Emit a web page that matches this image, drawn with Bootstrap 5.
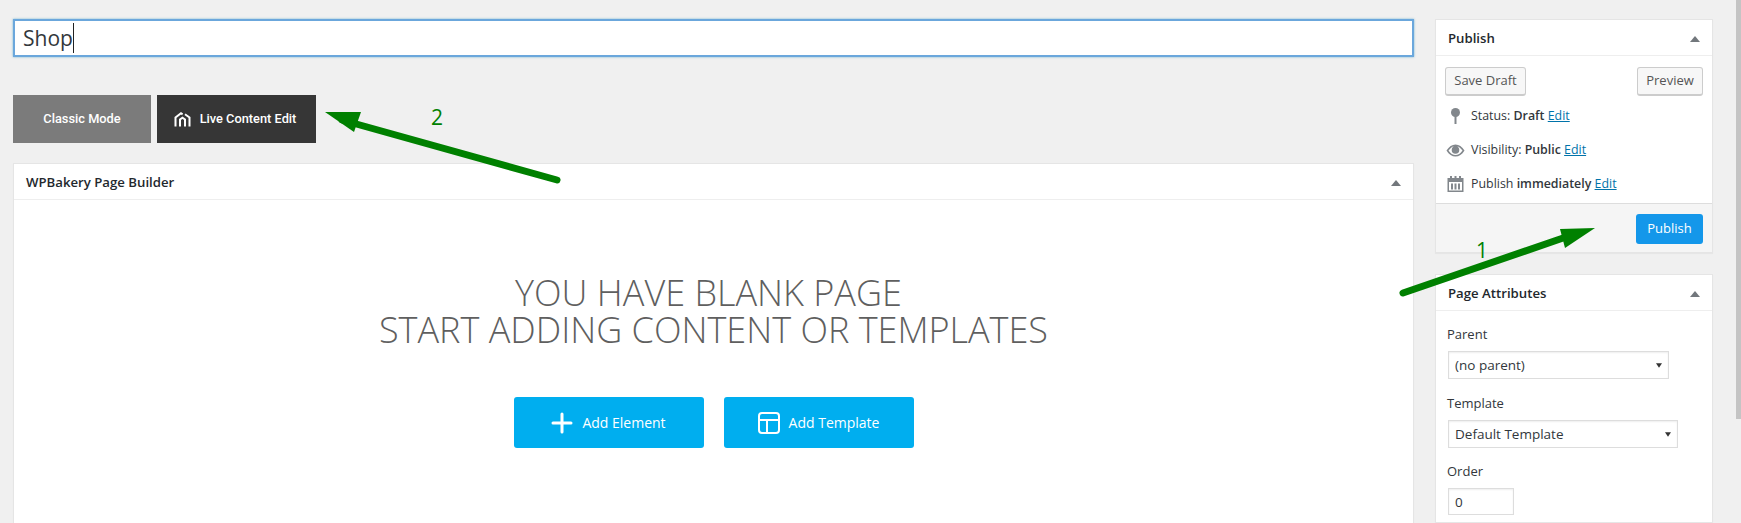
<!DOCTYPE html>
<html lang="en">
<head>
<meta charset="utf-8">
<title>Edit Page</title>
<link rel="stylesheet" href="https://cdn.jsdelivr.net/npm/bootstrap@5.3.0/dist/css/bootstrap.min.css">
<style>
html,body{height:523px;overflow:hidden}
body{background:#f0f0f0;font-family:"Open Sans",sans-serif;font-size:13px;color:#32373c;position:relative}
.shell{height:523px}
.main-col{width:1401px;margin-left:13px;padding-top:19px}
.side-col{width:278px;margin-left:21px;padding-top:19px}
.bar-col{width:5px;margin-left:23px}
.bar-thumb{height:419px;background:#c4c4c4}
.title-field{height:38px;border:2px solid #6ba7dc;background:#fff;font-size:21px;line-height:1;padding-left:8px;color:#32373c;box-shadow:0 0 2px rgba(30,140,190,.6)}
.type-caret{display:inline-block;width:1px;height:30px;background:#222}
.mode-row{margin-top:38px;gap:6px}
.mode-btn{height:48px;font-family:Roboto,sans-serif;font-weight:500;font-size:12.800px;color:#fff;border:0;border-radius:0}
.mode-classic{width:138px;background:#7b7b7b}
.mode-live{width:159px;background:#363636;gap:9px;padding:0 3px 0 0}
.wp-box{background:#fff;border:1px solid #e5e5e5;border-bottom:0;box-shadow:0 1px 1px rgba(0,0,0,.04);border-radius:0}
.box-head{height:36px;border-bottom:1px solid #eee;padding:2px 10px 0 12px;font-weight:600;color:#23282d;font-size:13.200px}
.builder{margin-top:20px;height:360px}
.tri{width:0;height:0;border-left:5px solid transparent;border-right:5px solid transparent;border-bottom:6px solid #72777c;margin-right:2px}
.blank-msg{margin-top:74px;font-weight:300;font-size:36px;line-height:37px;color:#5f5f5f;text-align:center}
.blank-first{padding-right:10px}
.add-row{margin-top:49px;gap:20px}
.add-btn{width:190px;height:51px;background:#00aeef;color:#fff;border:0;border-radius:3px;font-size:14px;gap:9px;padding:0}
.pub-top{padding:11px 9px 0 9px}
.wp-btn{height:29px;background:#f7f7f7;border:1px solid #ccc;border-bottom-width:2px;border-radius:3px;color:#555;font-size:13px;padding:0}
.btn-draft{width:81px}
.btn-view{width:66px}
.meta-list{padding:0 0 0 10px;margin:3px 0 0;font-size:12.400px}
.meta-item{height:34px;gap:6px}
.meta-ico{width:19px;flex:none}
.meta-item a{color:#0073aa}
.pub-foot{margin-top:2px;height:50px;background:#f5f5f5;border-top:1px solid #ddd;border-bottom:1px solid #e5e5e5;padding:10px 9px 0 0}
.pub-btn{width:67px;height:30px;background:#1497ea;color:#fff;border:0;border-radius:3px;font-size:13px;padding:0}
.attrs{margin-top:21px;height:248px}
.attr-body{padding:14px 11px}
.attr-label{line-height:18px;margin-bottom:8px}
.wp-select.form-select{height:28px;border:1px solid #ddd;border-radius:0;font-size:13.500px;color:#32373c;padding:0 0 0 6px;margin-bottom:14px;margin-left:1px;box-shadow:inset 0 1px 2px rgba(0,0,0,.07);background-size:6px 5px;background-position:right 6px center;background-image:url("data:image/svg+xml,%3Csvg xmlns='http://www.w3.org/2000/svg' viewBox='0 0 8 6'%3E%3Cpath d='M0 0h8L4 6z' fill='%23333'/%3E%3C/svg%3E")}
.wp-select.sel-a{width:221px;margin-bottom:15px}
.sel-b{width:230px}
.wp-num.form-control{width:66px;height:27px;border:1px solid #ddd;border-radius:0;font-size:13.500px;color:#32373c;padding:0 0 0 6px;margin-left:1px;box-shadow:inset 0 1px 2px rgba(0,0,0,.07)}
.arrows{position:absolute;left:0;top:0;pointer-events:none}
.arrows text{font-family:"Open Sans",sans-serif;font-size:21px;fill:#008000}
</style>
</head>
<body>
<div class="shell d-flex">
  <div class="main-col flex-none">
    <div class="title-field d-flex align-items-center">Shop<span class="type-caret"></span></div>
    <div class="mode-row d-flex">
      <button class="btn mode-btn mode-classic" type="button">Classic Mode</button>
      <button class="btn mode-btn mode-live d-flex align-items-center justify-content-center" type="button">
        <svg width="17" height="15" viewBox="0 0 17 15" fill="none" stroke="#fff" stroke-width="2"><path d="M1.500 14.500V5.500L7 1.300l1.600 1.100M11 2.300l4.500 3.200V14.500M6 14.500V7.500l2.500-1.800 2.500 1.800V14.500"/></svg>
        <span>Live Content Edit</span>
      </button>
    </div>
    <div class="wp-box builder">
      <div class="box-head d-flex align-items-center justify-content-between"><span>WPBakery Page Builder</span><i class="tri"></i></div>
      <div class="blank-msg"><div class="blank-first">YOU HAVE BLANK PAGE</div><div>START ADDING CONTENT OR TEMPLATES</div></div>
      <div class="add-row d-flex justify-content-center">
        <button class="btn add-btn d-flex align-items-center justify-content-center" type="button">
          <svg width="22" height="22" viewBox="0 0 22 22" stroke="#fff" stroke-width="3" stroke-linecap="round"><path d="M11 2v18M2 11h18"/></svg>
          <span>Add Element</span>
        </button>
        <button class="btn add-btn d-flex align-items-center justify-content-center" type="button">
          <svg width="22" height="22" viewBox="0 0 22 22" fill="none" stroke="#fff" stroke-width="2"><rect x="1" y="1" width="20" height="20" rx="3"/><path d="M1 8h20M9 8v13"/></svg>
          <span>Add Template</span>
        </button>
      </div>
    </div>
  </div>
  <div class="side-col flex-none">
    <div class="wp-box">
      <div class="box-head d-flex align-items-center justify-content-between"><span>Publish</span><i class="tri"></i></div>
      <div class="pub-top d-flex justify-content-between">
        <button class="btn wp-btn btn-draft" type="button">Save Draft</button>
        <button class="btn wp-btn btn-view" type="button">Preview</button>
      </div>
      <div class="meta-list">
        <div class="meta-item d-flex align-items-center">
          <svg class="meta-ico" height="16" viewBox="0 0 19 16" fill="#82878c"><circle cx="9.500" cy="4.500" r="4.500"/><rect x="8.500" y="6" width="2" height="10"/></svg>
          <span>Status: <b class="fw-semibold">Draft</b> <a href="#">Edit</a></span>
        </div>
        <div class="meta-item d-flex align-items-center">
          <svg class="meta-ico" height="13" viewBox="0 0 19 13"><path d="M0.500 6.500C3 2.500 6 .5 9.500 .5s6.500 2 9 6c-2.500 4-5.500 6-9 6s-6.500-2-9-6z" fill="#82878c"/><path d="M2.500 6.500C4.500 3.800 6 2.800 7 2.400a4.500 4.500 0 0 0 5 0c1 .4 2.500 1.400 4.500 4.100-2 3-4.500 4.600-7 4.600s-5-1.600-7-4.600z" fill="#fff"/><circle cx="9.500" cy="6" r="3.800" fill="#82878c"/></svg>
          <span>Visibility: <b class="fw-semibold">Public</b> <a href="#">Edit</a></span>
        </div>
        <div class="meta-item d-flex align-items-center">
          <svg class="meta-ico" height="16" viewBox="0 0 19 16" fill="#82878c"><path d="M1.500 2h16v14h-16zM3 6v8.500h13V6z" fill-rule="evenodd"/><rect x="4" y="0" width="2" height="3.500"/><rect x="8.500" y="0" width="2" height="3.500"/><rect x="13" y="0" width="2" height="3.500"/><rect x="5" y="7.500" width="2" height="6"/><rect x="8.500" y="7.500" width="2" height="6"/><rect x="12" y="7.500" width="2" height="6"/></svg>
          <span>Publish <b class="fw-semibold">immediately</b> <a href="#">Edit</a></span>
        </div>
      </div>
      <div class="pub-foot d-flex justify-content-end align-items-start">
        <button class="btn pub-btn" type="button">Publish</button>
      </div>
    </div>
    <div class="wp-box attrs">
      <div class="box-head d-flex align-items-center justify-content-between"><span>Page Attributes</span><i class="tri"></i></div>
      <div class="attr-body">
        <div class="attr-label">Parent</div>
        <select class="form-select wp-select sel-a"><option>(no parent)</option></select>
        <div class="attr-label">Template</div>
        <select class="form-select wp-select sel-b"><option>Default Template</option></select>
        <div class="attr-label">Order</div>
        <input class="form-control wp-num" type="text" value="0">
      </div>
    </div>
  </div>
  <div class="bar-col flex-none"><div class="bar-thumb"></div></div>
</div>
<svg class="arrows" width="1741" height="523" viewBox="0 0 1741 523">
  <g fill="#008000" stroke="#008000" stroke-linecap="round">
    <path d="M557 180L342 120" stroke-width="7" fill="none"/>
    <path d="M325 112L361 112L354 132Z" stroke="none"/>
    <path d="M1403 293L1566 237" stroke-width="7" fill="none"/>
    <path d="M1595 228L1560 229L1565 248Z" stroke="none"/>
  </g>
  <text x="431" y="125">2</text>
  <text x="1476" y="258">1</text>
</svg>
<script src="https://cdn.jsdelivr.net/npm/bootstrap@5.3.0/dist/js/bootstrap.bundle.min.js"></script>
</body>
</html>
